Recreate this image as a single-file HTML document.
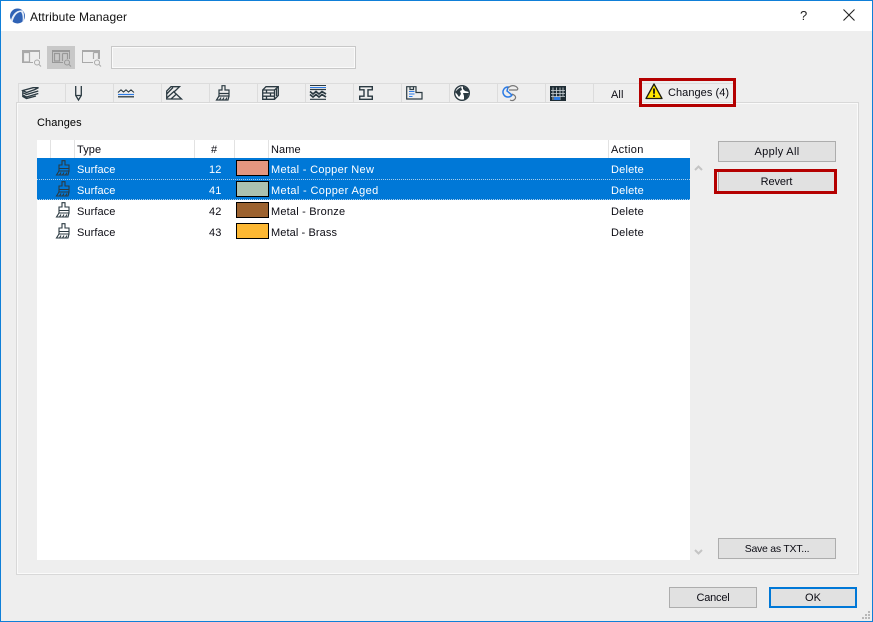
<!DOCTYPE html>
<html><head><meta charset="utf-8"><style>
html,body{margin:0;padding:0}
#w{position:relative;width:873px;height:622px;background:#eee;overflow:hidden;font-family:"Liberation Sans",sans-serif;font-size:11px;color:#0c0c14;letter-spacing:.1px}
#w div,#w svg{position:absolute}
.t{white-space:nowrap;line-height:14px}
.btn{background:#e1e1e1;border:1px solid #adadad;box-sizing:border-box;text-align:center;line-height:21px}
.sep{width:1px;background:#dcdcdc}
.hs{width:1px;height:18px;top:140px;background:#e2e2e2}
.sel{background:#0078d7}
.sw{left:236px;width:33px;height:16px;box-sizing:border-box;border:1px solid #000}
.w{color:#fff}
svg{overflow:visible}
</style></head><body><div id="w">
<div style="left:0;top:0;width:873px;height:31px;background:#fff"></div>
<div style="left:0;top:0;width:873px;height:1px;background:#0f7fd8"></div>
<div style="left:0;top:0;width:1px;height:622px;background:#0f7fd8"></div>
<div style="left:872px;top:0;width:1px;height:622px;background:#0f7fd8"></div>
<div style="left:0;top:621px;width:873px;height:1px;background:#0f7fd8"></div>

<svg style="left:10px;top:8px" width="16" height="16" viewBox="0 0 16 16"><circle cx="7.500" cy="8" r="7.500" fill="#2f62b5"/><path d="M1 12C2.500 6 7 1.500 12.500 2.500 14.500 5 14.500 10 13.500 13.500L12.500 14C13 9 12.500 6 11 4 7 4 4 8 2.500 14Z" fill="#e4ecf8"/></svg>
<div class="t" style="left:30px;top:10px;font-size:12px;letter-spacing:.1px;color:#111">Attribute Manager</div>
<div class="t" style="left:800px;top:9px;font-size:13px;color:#222">?</div>
<svg style="left:843px;top:9px" width="12" height="12"><path d="M.5.5 11.500 11.500M11.500.5.5 11.500" stroke="#222" stroke-width="1.100" fill="none"/></svg>

<div style="left:47px;top:46px;width:28px;height:23px;background:#c8c8c8"></div>
<svg style="left:22px;top:50px" width="19" height="17" fill="none" stroke="#a9a9a9"><path d="M.5 13V1H17.500V9M.5 12.500H11"/><path d="M0 1H18" stroke-width="2"/><path d="M1.500 2.500H7.500V12H1.500Z" stroke-width="1.200"/><circle cx="15" cy="12.500" r="2.500"/><path d="M17 14.500 19 16.500"/></svg>
<svg style="left:52px;top:50px" width="19" height="17" fill="none" stroke="#989898"><path d="M.5 13V1H17.500V9M.5 12.500H11"/><path d="M0 1H18" stroke-width="2"/><path d="M2.500 3.500H7.500V11H2.500ZM10.500 3.500H15.500V9M10.500 3.500V11" stroke-width="1.200"/><circle cx="15" cy="12.500" r="2.500"/><path d="M17 14.500 19 16.500"/></svg>
<svg style="left:82px;top:50px" width="19" height="17" fill="none" stroke="#a9a9a9"><path d="M.5 13V1H17.500V9M.5 12.500H11"/><path d="M0 1H18" stroke-width="2"/><path d="M11.500 2.500H16.500V9M11.500 2.500V9" stroke-width="1.200"/><circle cx="15" cy="12.500" r="2.500"/><path d="M17 14.500 19 16.500"/></svg>
<div style="left:111px;top:46px;width:245px;height:23px;box-sizing:border-box;border:1px solid #c8c8c8;box-shadow:inset 0 0 0 1px #fafafa;background:#eee"></div>

<div style="left:18px;top:83px;width:718px;height:1px;background:#dcdcdc"></div>
<div style="left:18px;top:102px;width:622px;height:1px;background:#dcdcdc"></div>
<div class="sep" style="left:18px;top:83px;height:19px"></div>
<div class="sep" style="left:65px;top:83px;height:19px"></div>
<div class="sep" style="left:113px;top:83px;height:19px"></div>
<div class="sep" style="left:161px;top:83px;height:19px"></div>
<div class="sep" style="left:209px;top:83px;height:19px"></div>
<div class="sep" style="left:257px;top:83px;height:19px"></div>
<div class="sep" style="left:305px;top:83px;height:19px"></div>
<div class="sep" style="left:353px;top:83px;height:19px"></div>
<div class="sep" style="left:401px;top:83px;height:19px"></div>
<div class="sep" style="left:449px;top:83px;height:19px"></div>
<div class="sep" style="left:497px;top:83px;height:19px"></div>
<div class="sep" style="left:545px;top:83px;height:19px"></div>
<div class="sep" style="left:593px;top:83px;height:19px"></div>

<div style="left:16px;top:102px;width:843px;height:473px;box-sizing:border-box;border:1px solid #d8d8d8;background:#eee"></div>
<div style="left:17px;top:103px;width:841px;height:471px;box-sizing:border-box;border:1px solid #fafafa"></div>

<svg style="left:22px;top:87px" width="17" height="12" fill="none" stroke="#2b3a42" stroke-width="1.300"><path d="M.8 3.500 11 .7H16.500L13 2.500 4.500 5.500ZM.8 3.500V5.500L4.500 7.500 16.300 4M.8 6V8L4.500 10 16.300 6.500M.8 8.500V9.500L4.500 11.500 14 9"/></svg>
<svg style="left:75px;top:86px" width="8" height="15" fill="none" stroke="#2b3a42" stroke-width="1.300"><path d="M.7 0V9.500L3.500 14 6.300 9.500V0M.7 9.500H6.300"/></svg>
<svg style="left:118px;top:89px" width="16" height="9" fill="none"><path d="M0 3.500 3 .8 5.500 3 8 .8 10.500 3 13 .8 16 3.500" stroke="#2b3a42" stroke-width="1.100"/><path d="M0 5.500H16" stroke="#2c7be5" stroke-width="1.200"/><path d="M0 7.800H16" stroke="#2b3a42" stroke-width="1.300"/></svg>
<svg style="left:166px;top:86px" width="17" height="14" fill="none" stroke="#2b3a42" stroke-width="1.300"><path d="M.7 13V5L5 .7H13.500L8 6 15.500 13ZM.7 8 7 1.500M.7 12 8.500 5M5 13 10.500 8"/></svg>
<svg style="left:216px;top:85px" width="14" height="16" fill="none" stroke="#2b3a42" stroke-width="1.200"><path d="M6 .7H9V5H13V11H3V5H6Z"/><path d="M3 8.500H13M3 11 .5 15H12L13 11M3.500 15 5 12.500M6.500 15 8 12.500M9.500 15 11 12.500"/></svg>
<svg style="left:262px;top:86px" width="17" height="14" fill="none" stroke="#2b3a42" stroke-width="1.300"><path d="M.7 4 4 .7H16.300V9.500L12.500 13.300H.7ZM.7 4H12.500V13.300M12.500 4 16.300 .7M.7 7H12.500M.7 10.200H12.500M4.500 4V7M8.500 7V10.200M4.500 10.200V13.300M14.500 3V10"/></svg>
<svg style="left:310px;top:85px" width="16" height="15"><path d="M0 .5H16" stroke="#2b3a42"/><path d="M0 2.500H16" stroke="#2c7be5"/><path d="M0 4.500H16M0 14.300H16" stroke="#2b3a42" stroke-width="1.200"/><path d="M0 6.500 3 9 6 6.500 9 9 12 6.500 16 9M0 9.500 3 12 6 9.500 9 12 12 9.500 16 12" stroke="#2b3a42" fill="none" stroke-width="1.700"/></svg>
<svg style="left:359px;top:86px" width="14" height="14" fill="none" stroke="#2b3a42" stroke-width="1.400"><path d="M.7.7H13.300V3.800H9V10.200H13.300V13.300H.7V10.200H5V3.800H.7Z"/></svg>
<svg style="left:406px;top:86px" width="17" height="14" fill="none" stroke="#2b3a42" stroke-width="1.200"><path d="M.7.7H10V6.500H16V13H.7Z"/><path d="M4 .7V3.500H7.500V.7"/><path d="M3 5.500H8.500M3 8H8.500M3 10.500H6.500" stroke="#2c7be5" stroke-width="1.100"/></svg>
<svg style="left:454px;top:85px" width="16" height="16"><circle cx="8" cy="8" r="7.300" fill="#fff" stroke="#2b3a42" stroke-width="1.400"/><path d="M1 7 4 4 7 2 8 5 6 6 7 9 5 12 3 9ZM9 1 14 4 15 7 11 6 9 4ZM9 8H15L13 13 10 15 10 11Z" fill="#2b3a42"/></svg>
<svg style="left:502px;top:85px" width="17" height="16" fill="none"><path d="M6 2A5 5 0 1 0 10 10L5 6Z" stroke="#2c7be5" stroke-width="1.500"/><path d="M6 3Q10-.8 14 1.500 17 3.500 15 5H7M10 9Q15 11 13 14 11 16.500 8 15" stroke="#777" stroke-width="1.200"/></svg>
<svg style="left:550px;top:86px" width="16" height="15"><rect width="16" height="15" fill="#1f2d35"/><path d="M3 1.500V14M6.500 1.500V14M10 1.500V14M13 1.500V10M1 4.500H15M1 7.500H15M1 10.500H15" stroke="#cfd6da" stroke-width=".8"/><rect x="4" y="11" width="6" height="3" fill="#2c7be5"/></svg>
<div class="t" style="left:611px;top:88px">All</div>

<div style="left:639px;top:78px;width:97px;height:29px;box-sizing:border-box;border:3px solid #b40000"></div>
<svg style="left:645px;top:83px" width="18" height="17"><path d="M9 1 17 15.500H1Z" fill="#ffe600" stroke="#1c1c10" stroke-width="1.300" stroke-linejoin="round"/><path d="M9 5.500V10.800M9 11.800V14" stroke="#111" stroke-width="1.800"/></svg>
<div class="t" style="left:668px;top:86px;letter-spacing:.05px">Changes (4)</div>

<div class="t" style="left:37px;top:116px;color:#000">Changes</div>

<div style="left:37px;top:140px;width:653px;height:420px;background:#fff"></div>
<div class="hs" style="left:50px"></div><div class="hs" style="left:74px"></div><div class="hs" style="left:194px"></div><div class="hs" style="left:234px"></div><div class="hs" style="left:268px"></div><div class="hs" style="left:608px"></div>
<div class="t" style="left:77px;top:143px">Type</div>
<div class="t" style="left:211px;top:143px">#</div>
<div class="t" style="left:271px;top:143px">Name</div>
<div class="t" style="left:611px;top:143px;letter-spacing:.35px">Action</div>

<div class="sel" style="left:37px;top:158px;width:653px;height:21px"></div>
<div class="sel" style="left:37px;top:179px;width:653px;height:21px"></div>
<div style="left:37px;top:179px;width:653px;height:0;border-top:1px dotted #a9cdea"></div>
<div style="left:37px;top:199px;width:653px;height:0;border-top:1px dotted #a9cdea"></div>

<svg style="left:56px;top:160px" width="14" height="16" fill="none" stroke="#2b3a42" stroke-width="1.100"><path d="M6 .7H9V5H13V11H3V5H6Z"/><path d="M3 8.500H13M3 11 .5 15H12L13 11M3.500 15 5 12.500M6.500 15 8 12.500M9.500 15 11 12.500"/></svg>
<svg style="left:56px;top:181px" width="14" height="16" fill="none" stroke="#2b3a42" stroke-width="1.100"><path d="M6 .7H9V5H13V11H3V5H6Z"/><path d="M3 8.500H13M3 11 .5 15H12L13 11M3.500 15 5 12.500M6.500 15 8 12.500M9.500 15 11 12.500"/></svg>
<svg style="left:56px;top:202px" width="14" height="16" fill="none" stroke="#2b3a42" stroke-width="1.100"><path d="M6 .7H9V5H13V11H3V5H6Z"/><path d="M3 8.500H13M3 11 .5 15H12L13 11M3.500 15 5 12.500M6.500 15 8 12.500M9.500 15 11 12.500"/></svg>
<svg style="left:56px;top:223px" width="14" height="16" fill="none" stroke="#2b3a42" stroke-width="1.100"><path d="M6 .7H9V5H13V11H3V5H6Z"/><path d="M3 8.500H13M3 11 .5 15H12L13 11M3.500 15 5 12.500M6.500 15 8 12.500M9.500 15 11 12.500"/></svg>

<div class="t w" style="left:77px;top:163px;letter-spacing:.07px">Surface</div>
<div class="t w" style="left:209px;top:163px">12</div>
<div class="sw" style="top:160px;background:#e4967f"></div>
<div class="t w" style="left:271px;top:163px;letter-spacing:.3px">Metal - Copper New</div>
<div class="t w" style="left:611px;top:163px;letter-spacing:.2px">Delete</div>

<div class="t w" style="left:77px;top:184px;letter-spacing:.07px">Surface</div>
<div class="t w" style="left:209px;top:184px">41</div>
<div class="sw" style="top:181px;background:#abc1b0"></div>
<div class="t w" style="left:271px;top:184px;letter-spacing:.35px">Metal - Copper Aged</div>
<div class="t w" style="left:611px;top:184px;letter-spacing:.2px">Delete</div>

<div class="t" style="left:77px;top:205px;letter-spacing:.07px">Surface</div>
<div class="t" style="left:209px;top:205px">42</div>
<div class="sw" style="top:202px;background:#9c622f"></div>
<div class="t" style="left:271px;top:205px;letter-spacing:.2px">Metal - Bronze</div>
<div class="t" style="left:611px;top:205px;letter-spacing:.2px">Delete</div>

<div class="t" style="left:77px;top:226px;letter-spacing:.07px">Surface</div>
<div class="t" style="left:209px;top:226px">43</div>
<div class="sw" style="top:223px;background:#fdb833"></div>
<div class="t" style="left:271px;top:226px;letter-spacing:.1px">Metal - Brass</div>
<div class="t" style="left:611px;top:226px;letter-spacing:.2px">Delete</div>

<svg style="left:694px;top:164px" width="9" height="7" fill="none" stroke="#c4c4c4" stroke-width="2"><path d="M1 6 4.500 2.500 8 6"/></svg>
<svg style="left:694px;top:549px" width="9" height="7" fill="none" stroke="#c4c4c4" stroke-width="2"><path d="M1 1 4.500 4.500 8 1"/></svg>

<div class="btn" style="left:718px;top:141px;width:118px;height:21px;letter-spacing:.3px">Apply All</div>
<div class="btn" style="left:718px;top:172px;width:116px;height:19px;line-height:20px;border:0;border-left:1px solid #adadad;letter-spacing:-.1px">Revert</div>
<div style="left:714px;top:169px;width:123px;height:25px;box-sizing:border-box;border:3px solid #b40000"></div>
<div class="btn" style="left:718px;top:538px;width:118px;height:21px;font-size:10.500px;letter-spacing:-.25px">Save as TXT...</div>
<div class="btn" style="left:669px;top:587px;width:88px;height:21px;letter-spacing:-.2px">Cancel</div>
<div class="btn" style="left:769px;top:587px;width:88px;height:21px;border:2px solid #0078d7;line-height:19px;letter-spacing:0">OK</div>

<svg style="left:861px;top:610px" width="10" height="10" fill="#b8b8b8"><rect x="7" y="1" width="2" height="2"/><rect x="4" y="4" width="2" height="2"/><rect x="7" y="4" width="2" height="2"/><rect x="1" y="7" width="2" height="2"/><rect x="4" y="7" width="2" height="2"/><rect x="7" y="7" width="2" height="2"/></svg>
</div></body></html>
